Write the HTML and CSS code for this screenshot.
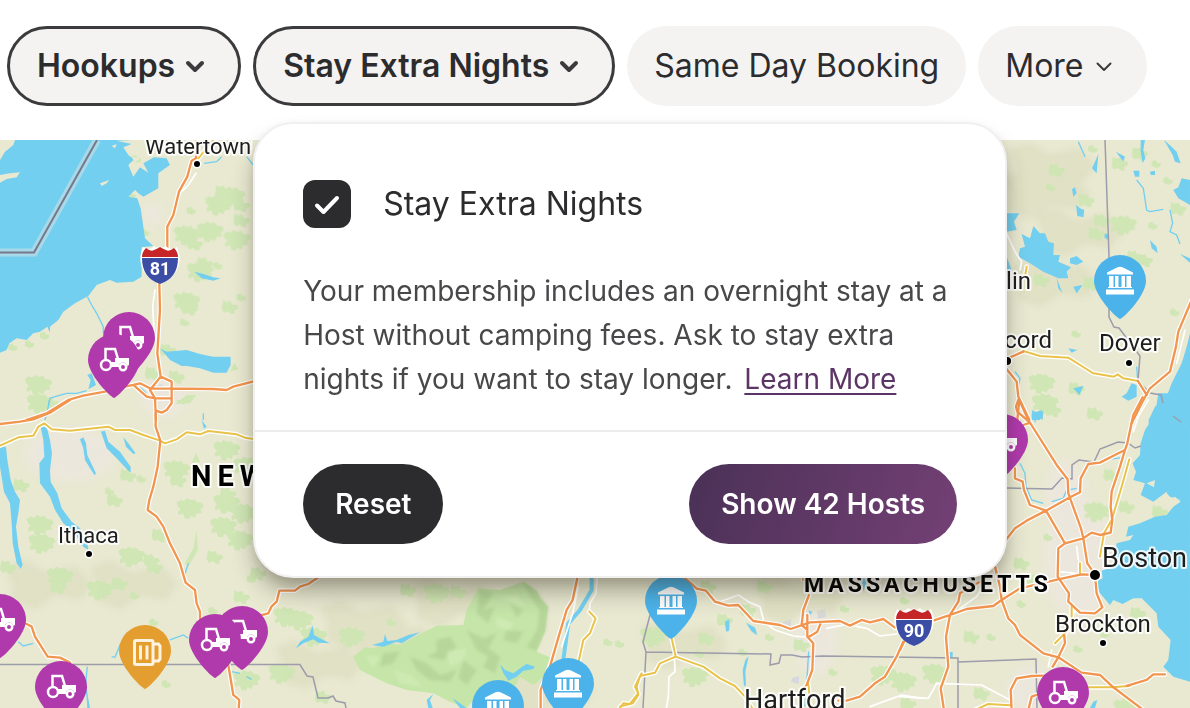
FILE: index.html
```html
<!DOCTYPE html>
<html lang="en">
<head>
<meta charset="utf-8">
<meta name="viewport" content="width=device-width, initial-scale=1">
<title>Host map</title>
<link rel="stylesheet" href="styles.css">
</head>
<body>
<header class="filters">
  <button class="pill pill-active" type="button">Hookups<svg class="chevron" viewBox="0 0 32 32" aria-hidden="true"><path d="M9 14l7 7 7-7"/></svg></button>
  <div class="filter-anchor">
    <button class="pill pill-active" type="button" aria-expanded="true">Stay Extra Nights<svg class="chevron" viewBox="0 0 32 32" aria-hidden="true"><path d="M9 14l7 7 7-7"/></svg></button>
    <section class="popover" aria-label="Stay Extra Nights">
      <div class="popover-body">
        <label class="check" for="extra-nights">
          <span class="check-box">
            <input class="check-input" type="checkbox" id="extra-nights" checked>
            <svg class="check-mark" viewBox="0 0 48 48" aria-hidden="true"><path d="M14 25.500l6.500 6.500L34 18"/></svg>
          </span>
          <span>Stay Extra Nights</span>
        </label>
        <p class="note">Your membership includes an overnight stay at a Host without camping fees. Ask to stay extra nights if you want to stay longer. <a class="learn" href="#">Learn More</a></p>
      </div>
      <footer class="popover-actions">
        <button class="action action-dark" type="button">Reset</button>
        <button class="action action-primary" type="button">Show 42 Hosts</button>
      </footer>
    </section>
  </div>
  <button class="pill" type="button">Same Day Booking</button>
  <button class="pill" type="button">More<svg class="chevron chevron-thin" viewBox="0 0 32 32" aria-hidden="true"><path d="M9.500 14.500l6.500 6.500 6.500-6.500"/></svg></button>
</header>

<main class="map">
<svg class="map-canvas" viewBox="0 140 1190 568" preserveAspectRatio="xMinYMin slice" role="img" aria-label="Map of hosts in New York and New England">
  <defs>
    <path id="wood-a" d="M0 12l12-8 10 4 8-8 14 6 8-4 10 10 14 2 6 12-10 6 4 12-16 2-6 12-12-6-4 10-14-2-4-14-14 4-2-10 8-8-8-6z"/>
    <path id="wood-b" d="M4 0l10 6 12-4 6 12 14 0 4 10-12 8 2 8-12 2-8-8-14 4-6-12z"/>
    <path id="wood-c" d="M0 4l12-4 6 8 10 2-2 10-12 4-14-6z"/>
    <path id="slope" d="M0 8l20-8 22 12 30-6 16 18-12 16-26-4-20 14-24-10 2-14z"/>
    <path id="pin" d="M0 0C-5-2-26-24-26-38A26 26 0 0 1 26-38C26-24 5-2 0 0z"/>
    <g id="tractor-pin">
      <use href="#pin" class="pin-purple"/>
      <g class="glyph-line"><circle cx="-8" cy="-33" r="5"/><path d="M-8.500-39v-10H1l3 10"/><circle cx="9" cy="-31" r="3.200"/></g>
      <path class="glyph-fill" d="M-3-36H1v-4H15v7l-2 1a4 4 0 0 0-8 1H-2z"/>
    </g>
    <g id="museum-pin">
      <use href="#pin" class="pin-blue"/>
      <path class="glyph-fill" d="M-13-44.500v-2L-3-51.500Q0-53 3-51.500L13-46.500v2zM-11-43h4.500v11H-11zM-5-43h3.500v11H-5zM1.500-43H5v11H1.500zM6.500-43H11v11H6.500zM-12-32H12v1H-12zM-14-29.500H14v5H-14z"/>
    </g>
    <g id="beer-pin">
      <use href="#pin" class="pin-orange"/>
      <g class="glyph-line glyph-beer"><rect x="-10.500" y="-48.500" width="18.500" height="24" rx="1.500"/><path d="M8-45h5.500l1.500 2v13l-1.500 2H8M-4.500-43.500v14M2-43.500v14"/></g>
    </g>
    <g id="shield">
      <path class="shield-case" d="M-17-19l4 2q5 0 7-3 3 3 6 0 3 3 6 0 2 3 7 3l4-2q4 8 2 18-4 14-19 19-15-5-19-19-2-10 2-18z"/>
      <path class="shield-red" d="M-18-9Q-18-14-14-18 -9-14-6-16 -3-17 0-19 3-17 6-16 9-14 14-18 18-14 18-9z"/>
      <path class="shield-blue" d="M-18-8h36q0 20-18 26Q-18 12-18-8z"/>
    </g>
    <g id="motorways">
      <g transform="translate(0 130) scale(.3333)">
        <path d="M588 20V85L575 92 562 140 537 185 520 255 502 290V370M478 460L480 540 472 670 482 740 450 780 465 805 468 870M80 870L140 850 205 810 250 797 315 785 375 770 400 765 420 760 450 775 640 777 680 780 700 770 770 752M482 740L515 755V820L500 840 485 848 468 842M400 765L440 800 465 805H512"/>
      </g>
      <g transform="translate(0 400) scale(.3333)">
        <path d="M0 72L60 65 100 58 150 38 210 0M467 40V80L481 122 473 200 460 260 448 300 443 330 470 350 490 380 510 430 540 490 557 548 585 570 590 610 600 635V670M60 668L80 672 95 680 105 710 143 770 180 773 210 788M685 795L700 885 718 900 716 930"/>
      </g>
      <g transform="translate(250 560) scale(.3333)">
        <path d="M35 165L55 160 64 140 80 125 88 92H135L150 80 175 72 215 45M985 40L968 120 950 150 920 250 900 320 872 390V450"/>
      </g>
      <g transform="translate(620 560) scale(.3333)">
        <path d="M190 50L230 86 258 92 285 125 325 137 355 135 400 183 480 195 512 207 570 187 660 183 690 197 725 180 750 187 790 177 825 203M550 40V60M567 105L550 150 545 195 560 208M562 165V230L580 250 577 330 560 375 545 390M603 187L592 215 565 232M850 245L830 290 795 350 765 370 720 410 680 422H655"/>
      </g>
      <g transform="translate(900 400) scale(.3333)">
        <path d="M728-8L700 45 682 130 675 150 655 160 600 188 565 192 542 235 540 277 510 292 438 332 380 362 345 385 310 430M675 150L660 200 635 275 632 320 637 360 632 398 600 405 575 398 550 415 495 430 475 445 473 530 507 580 505 605 540 638 585 640 607 622 590 580 585 525M358 0L385 60 470 195 503 238 505 280 543 385 550 415 562 490 583 520M355 0L348 20 352 35 390 68 370 75M345 205V235L368 245 372 270 390 315 438 332 495 430M585 525L545 523 475 538 360 565 305 600 280 618 200 627 150 645 100 662M285 500L300 560 305 600 325 655 345 675 360 705 430 760 475 772 545 818 600 825 640 862 730 930M240 545L180 580 175 605 150 645 138 710 145 800 122 865 132 930M492 700L495 730 475 772 458 800M430 827L395 828 350 835 332 870 335 930M410 885L395 890 385 930M0 750L12 725M680 858L740 840 760 823H795"/>
      </g>
      <g transform="translate(990 130) scale(.3333)">
        <path d="M605 510L565 605 558 650 540 725 480 775 455 820 425 880M443 752L470 795M50 690L60 682 100 665M40 705L80 755 85 800 118 870M88 810L82 870"/>
      </g>
    </g>
    <g id="highways">
      <g transform="translate(0 130) scale(.3333)"><path d="M595 85L640 30"/></g>
      <g transform="translate(0 400) scale(.3333)"><path d="M0 137L55 112 100 107 115 80 133 70 155 88 210 92 325 80 345 90 390 90 430 105 480 122 495 130 530 118 560 97 600 103 625 93 710 103 735 113 770 118"/></g>
      <g transform="translate(250 560) scale(.3333)"><path d="M1018 155L1037 175 1020 220 1000 240 985 310M1175 340L1155 380 1165 400 1140 432 1120 430 1105 450"/></g>
      <g transform="translate(620 560) scale(.3333)"><path d="M155 235L167 290 120 310 105 338 60 348 50 380 55 405 38 430 0 440M167 290L250 320 300 355 345 378 375 410 400 450M565 372L568 400"/></g>
      <g transform="translate(900 400) scale(.3333)"><path d="M688 178L665 260 635 360 612 400 600 470M515 620V680L465 730M565 862L640 862 690 857M225 930L265 912 330 916M540 490V520"/></g>
      <g transform="translate(990 130) scale(.3333)"><path d="M100 663L150 678 235 683 275 708 310 730 372 740 383 733 400 745 440 752M110 410L105 440"/></g>
    </g>
  </defs>

  <rect class="land" x="0" y="140" width="1190" height="568"/>

  <g class="urban">
    <ellipse cx="163" cy="398" rx="22" ry="20"/><ellipse cx="153" cy="215" rx="9" ry="12"/><ellipse cx="70" cy="455" rx="45" ry="26"/><ellipse cx="815" cy="640" rx="22" ry="34"/><ellipse cx="1078" cy="560" rx="34" ry="58"/><ellipse cx="1066" cy="495" rx="20" ry="34"/><ellipse cx="1030" cy="690" rx="22" ry="24"/>
  </g>
  <g class="town"><path d="M783 622l8-3v10l-6 2zM817 611l8-2 1 8-8 2zM792 678l7-2v8l-8-2zM155 387l7-3 3 5-8 2z"/></g>

  <g class="relief">
    <use href="#slope" x="1008" y="142"/><use href="#slope" x="1002" y="170"/><use href="#slope" x="1035" y="208"/><use href="#slope" x="1010" y="258"/>
    <use href="#slope" x="320" y="600"/><use href="#slope" x="350" y="620"/><use href="#slope" x="410" y="578"/><use href="#slope" x="275" y="640"/><use href="#slope" x="640" y="620"/><use href="#slope" x="90" y="560"/><use href="#slope" x="5" y="560"/><use href="#slope" x="755" y="575"/><use href="#slope" x="505" y="668"/>
  </g>

  <g class="woods">
    <g transform="translate(0 130) scale(.3333)">
      <use href="#wood-a" x="615" y="195"/><use href="#wood-a" x="655" y="170"/><use href="#wood-b" x="700" y="205"/><use href="#wood-b" x="645" y="165"/><use href="#wood-c" x="560" y="230"/><use href="#wood-a" x="520" y="285"/><use href="#wood-a" x="590" y="275"/><use href="#wood-b" x="560" y="320"/><use href="#wood-a" x="670" y="300"/><use href="#wood-b" x="700" y="250"/><use href="#wood-b" x="590" y="380"/><use href="#wood-a" x="560" y="395"/><use href="#wood-c" x="640" y="395"/><use href="#wood-a" x="520" y="485"/><use href="#wood-b" x="545" y="515"/><use href="#wood-b" x="665" y="510"/><use href="#wood-c" x="710" y="490"/><use href="#wood-c" x="540" y="565"/><use href="#wood-b" x="480" y="640"/><use href="#wood-b" x="505" y="720"/><use href="#wood-b" x="435" y="710"/><use href="#wood-a" x="75" y="735"/><use href="#wood-a" x="80" y="790"/><use href="#wood-b" x="130" y="800"/><use href="#wood-c" x="380" y="185"/><use href="#wood-c" x="395" y="75"/><use href="#wood-c" x="420" y="295"/><use href="#wood-c" x="75" y="630"/><use href="#wood-c" x="120" y="605"/><use href="#wood-c" x="25" y="640"/>
      <path d="M525 822L560 795 588 795 570 820zM690 725L703 698 715 718z"/>
    </g>
    <g transform="translate(0 400) scale(.3333)">
      <use href="#wood-a" x="80" y="345"/><use href="#wood-a" x="85" y="400"/><use href="#wood-b" x="40" y="235"/><use href="#wood-b" x="320" y="280"/><use href="#wood-c" x="315" y="262"/><use href="#wood-b" x="360" y="205"/><use href="#wood-c" x="410" y="225"/><use href="#wood-a" x="490" y="180"/><use href="#wood-b" x="510" y="220"/><use href="#wood-b" x="455" y="385"/><use href="#wood-a" x="355" y="440"/><use href="#wood-b" x="440" y="480"/><use href="#wood-b" x="430" y="460"/><use href="#wood-a" x="140" y="500"/><use href="#wood-b" x="150" y="540"/><use href="#wood-a" x="260" y="540"/><use href="#wood-b" x="335" y="530"/><use href="#wood-c" x="390" y="575"/><use href="#wood-a" x="530" y="295"/><use href="#wood-a" x="640" y="120"/><use href="#wood-a" x="640" y="280"/><use href="#wood-a" x="690" y="310"/><use href="#wood-a" x="630" y="350"/><use href="#wood-a" x="680" y="390"/><use href="#wood-b" x="620" y="450"/><use href="#wood-a" x="700" y="170"/><use href="#wood-b" x="660" y="260"/><use href="#wood-b" x="700" y="570"/><use href="#wood-c" x="740" y="525"/><use href="#wood-b" x="0" y="480"/><use href="#wood-c" x="448" y="655"/><use href="#wood-c" x="625" y="620"/><use href="#wood-a" x="700" y="810"/><use href="#wood-c" x="485" y="840"/>
      <path d="M575 188L588 158 600 186zM555 490L580 445 590 390 594 450 565 500zM525 0H570L550 14z"/>
    </g>
    <g transform="translate(250 560) scale(.3333)">
      <use href="#wood-a" x="70" y="140"/><use href="#wood-a" x="110" y="150"/><use href="#wood-a" x="150" y="200"/><use href="#wood-a" x="265" y="200"/><use href="#wood-a" x="520" y="70"/><use href="#wood-b" x="600" y="75"/><use href="#wood-b" x="450" y="70"/><use href="#wood-a" x="55" y="310"/><use href="#wood-c" x="410" y="175"/><use href="#wood-b" x="195" y="390"/><use href="#wood-c" x="1060" y="235"/><use href="#wood-c" x="1095" y="240"/><use href="#wood-b" x="0" y="20"/>
    </g>
    <g transform="translate(620 560) scale(.3333)">
      <use href="#wood-b" x="235" y="215"/><use href="#wood-b" x="290" y="160"/><use href="#wood-a" x="185" y="320"/><use href="#wood-b" x="360" y="130"/><use href="#wood-c" x="355" y="265"/><use href="#wood-a" x="60" y="200"/><use href="#wood-c" x="225" y="270"/><use href="#wood-c" x="435" y="220"/><use href="#wood-b" x="520" y="235"/><use href="#wood-a" x="750" y="315"/><use href="#wood-a" x="810" y="335"/><use href="#wood-c" x="660" y="135"/><use href="#wood-c" x="840" y="110"/><use href="#wood-b" x="410" y="60"/><use href="#wood-b" x="240" y="60"/><use href="#wood-c" x="625" y="325"/>
    </g>
    <g transform="translate(900 400) scale(.3333)">
      <use href="#wood-a" x="550" y="305"/><use href="#wood-b" x="610" y="205"/><use href="#wood-b" x="655" y="300"/><use href="#wood-b" x="435" y="10"/><use href="#wood-c" x="430" y="400"/><use href="#wood-b" x="340" y="470"/><use href="#wood-b" x="690" y="620"/><use href="#wood-c" x="520" y="735"/><use href="#wood-c" x="260" y="700"/><use href="#wood-a" x="65" y="790"/><use href="#wood-b" x="190" y="690"/><use href="#wood-b" x="220" y="860"/><use href="#wood-a" x="640" y="895"/><use href="#wood-b" x="0" y="890"/><use href="#wood-b" x="755" y="315"/><use href="#wood-c" x="350" y="600"/><use href="#wood-b" x="560" y="20"/><use href="#wood-c" x="600" y="690"/><use href="#wood-b" x="380" y="520"/>
    </g>
    <g transform="translate(990 130) scale(.3333)">
      <use href="#wood-b" x="175" y="100"/><use href="#wood-c" x="168" y="160"/><use href="#wood-c" x="295" y="45"/><use href="#wood-b" x="365" y="80"/><use href="#wood-b" x="425" y="50"/><use href="#wood-c" x="485" y="90"/><use href="#wood-b" x="265" y="190"/><use href="#wood-b" x="310" y="250"/><use href="#wood-a" x="360" y="255"/><use href="#wood-b" x="295" y="290"/><use href="#wood-b" x="130" y="430"/><use href="#wood-b" x="410" y="360"/><use href="#wood-b" x="280" y="440"/><use href="#wood-c" x="475" y="275"/><use href="#wood-b" x="540" y="215"/><use href="#wood-a" x="115" y="730"/><use href="#wood-b" x="235" y="755"/><use href="#wood-c" x="540" y="535"/><use href="#wood-c" x="245" y="600"/><use href="#wood-a" x="125" y="790"/><use href="#wood-b" x="440" y="370"/><use href="#wood-c" x="520" y="140"/>
    </g>
  </g>

  <!-- Catskill park -->
  <g transform="translate(250 560) scale(.3333)">
    <path class="park" d="M310 290L345 262 370 265 410 250 450 255 510 222 560 197 640 195 650 150 685 85 750 90 820 65 860 92 870 115 895 140 885 215 860 275 900 292 880 350 850 375 810 350 790 390 740 370 700 385 650 444 600 425 550 400 470 390 410 370 370 350 330 330z"/>
    <path class="park-shade" d="M820 65L860 92 895 140 888 210 858 272 830 262 862 210 868 150 840 110zM690 90L730 100 700 150 735 140 715 190 680 160zM650 210L700 235 740 220 715 265 750 290 735 340 700 320 715 290 680 270zM560 240L600 230 620 260 580 300 530 290 560 275zM480 290L530 310 570 345 620 330 600 365 540 360 500 330zM640 300L680 330 650 375 625 355zM780 130L820 150 800 175zM400 280L450 275 430 310 390 320zM770 210L820 215 800 250 760 240z"/>
    <path class="park-light" d="M750 110L800 105 830 140 780 125zM590 275L650 265 640 300 600 320zM430 330L480 345 520 380 450 370zM740 170L790 190 780 210 740 200zM345 285L390 290 370 325z"/>
  </g>

  <g class="water">
    <g transform="translate(0 130) scale(.3333)">
      <path d="M45 30H395L350 32 395 42 370 52 385 75 402 88 385 105 400 140 420 112 445 128 430 100 462 82 500 85 510 105 475 130V175L430 200 415 190 405 180 385 200 412 205 422 235 430 290 435 325 460 348 425 352V440L400 455 350 458 330 450 290 465 265 498 225 520 190 545 175 570 150 590V608L142 590 120 605 100 610 80 630 50 625 28 640 20 660 0 668V90L15 65 40 45zM480 655L500 665 560 660 600 672 640 680H692V705L680 728 640 728 600 715 560 708 545 708 510 690 495 672zM583 425L610 432 640 442 662 445 640 452 605 445zM262 735L275 730 288 765 265 778 272 750zM420 768L440 788 435 792z"/>
      <path class="stream" d="M262 500L275 525 290 550 310 590V610M145 830L150 805 165 800 200 790 230 790 260 782M740 80L760 105M612 100L650 95 665 80M610 850V870"/>
      <path class="isle" d="M0 135L30 130 60 127 50 142 20 147 0 158zM300 160L328 150 320 160 305 168zM395 80L420 85 405 98zM335 48L350 42 345 55z"/>
    </g>
    <g transform="translate(0 400) scale(.3333)">
      <path d="M0 140H18L22 180 32 240 45 275 60 300 55 340 48 380 55 440 68 495 62 506 50 490 38 430 35 370 30 310 12 275 0 200zM122 80H140L150 120 156 160 150 210 152 245 172 280 185 325 215 365 240 385 262 430 265 450 250 440 220 395 190 370 165 330 150 290 120 250 118 190 133 170 130 120zM240 118L250 112 258 130 262 165 288 220 284 226 270 205 255 180 250 145zM303 95L315 92 325 125 360 155 392 200V217L385 212 350 175 320 145zM370 112L385 130 407 160 400 162 378 140zM605 60L620 80 612 86zM262 880L270 924H262z"/>
      <path class="stream" d="M148 0L145 20 135 60M565 490L555 522M55 725L70 738 100 730M335 770L345 772 362 730M510 720L550 705 565 715M262 800L257 850 265 924M695 815L720 820M740 830L755 838"/>
    </g>
    <g transform="translate(250 560) scale(.3333)">
      <path d="M138 265L150 245 175 230 188 196 192 225 215 238 240 250 205 248 190 238 160 250zM367 255L400 245 405 222 412 243 440 240 475 225 510 217 475 238 455 250 440 245 400 260zM750 313L765 330 790 340 820 318 830 312 855 320 848 328 820 332 800 350 775 362 760 340zM530 420L550 402 540 420 548 444H535zM608 415L650 444H630z"/>
      <path class="river" d="M1025 50V90L990 150 955 190 940 300"/>
    </g>
    <g transform="translate(620 560) scale(.3333)">
      <path d="M386 288L376 335 378 375 372 380 368 330 376 300zM315 185L328 178V212L318 215zM378 188L405 203 412 225 395 215zM565 152L578 155 570 165zM725 55L742 60 730 95z"/>
      <path class="stream" d="M566 275L560 370M558 385L555 440"/>
    </g>
    <g transform="translate(900 400) scale(.3333)">
      <path d="M775-20L765 45 735 90 722 130 720 165 698 190 708 215 700 240 735 250 722 285 760 305 780 290 800 275 805 300 825 290 842 305 820 320 800 345 765 350 720 370 685 380 678 410 700 405 690 420 650 430 640 500 605 512 608 535 585 545 600 580 630 615 640 600 668 612 700 595 725 595 770 640 775 680 812 720 805 780 790 800 820 830 870 845V-20zM395 30L415 40 430 35 428 60 412 50 405 70zM148 757L158 755V772H150zM580 905L592 900 585 924H570z"/>
      <path class="stream" d="M360 190L375 220 378 260 395 300 430 310M455 305L490 295 500 270 530 265M620 178L675 172M680 560L690 585 700 595"/>
      <path class="isle" d="M740 250L765 240 762 262zM770 300L800 280 810 290 840 300 820 318 780 318z"/>
    </g>
    <g transform="translate(990 130) scale(.3333)">
      <path d="M130 288L150 310 165 310 175 335 192 340 190 375 210 375 205 395 243 412 230 425 235 445 205 445 160 425 120 400 85 380 90 355 105 350 95 312 120 325zM240 385L260 378 280 395 260 405 240 400zM50 250L88 250 72 275 80 300 50 305zM258 225L270 235 283 240 280 262 262 258zM246 178L255 172 260 190 250 200zM550 180L565 172 575 145 600 150V225L565 205zM378 65L405 80 400 95zM452 30H465L460 60 466 85 458 100 452 65zM522 30L545 50 560 65 572 100 555 95 548 75zM315 95L325 72 320 130 306 115zM480 330L500 350 503 370 485 355zM430 122H448V140H435zM480 125L495 122V135H482zM250 470L278 465 260 490zM395 800L410 790 425 760 440 765V800L415 812zM345 310L357 315V332L343 322zM250 775L280 768 268 795zM235 655L262 660 245 668zM570 372L600 385V398zM605 590L590 650 575 700 545 760 530 800 495 830 476 870V900H620V590zM200 445L218 490 205 475zM50 380L65 420 50 440zM125 850L158 840 150 870H125z"/>
      <path class="stream" d="M440 150L460 175 470 240 480 245 520 238M540 240L548 280 540 305 560 315 570 342M265 35L285 80M75 725L90 745 85 770M440 710L443 750"/>
    </g>
  </g>

  <g class="borders">
    <path class="border-halo" d="M0 252.500H34L97 140"/>
    <path class="border-lake" d="M0 252.500H34L97 140"/>
    <path d="M0 664.500H300L307 676 313 677 318 698 328 698 333 696 336 701 345 703 346 708"/>
    <path d="M650 615L643 642 646 652 771 654 770 665 779 663 781 655 792 655 802 657 823 656 958 658V708M646 652L643 708M958 662L1036 659 1037 708"/>
    <path d="M1007 488L1052 489 1062 478 1072 479V465L1079 460 1094 462 1100 449 1118 442 1128 443 1135 448 1141 446M1173 416L1181 422"/>
    <path d="M1105 140L1109 256V317L1114 327 1119 328 1125 336 1140 356 1138 381 1150 393 1161 395 1163 403"/>
  </g>

  <g class="local-roads">
    <g transform="translate(0 130) scale(.3333)"><path d="M588 130L565 165 545 185M465 480L458 530 462 600 475 660M755 30V60"/></g>
    <g transform="translate(250 560) scale(.3333)"><path d="M1042 50L1038 100 1020 130 1018 155M985 80L968 160 935 260"/></g>
    <g transform="translate(620 560) scale(.3333)"><path d="M163 290L165 335 147 350 145 410 138 450M300 125L355 105 385 125 420 140 430 178M430 185L465 210 520 228 570 232M620 205L680 193 740 205 780 228 830 222M750 440L845 405 905 415"/></g>
    <g transform="translate(900 400) scale(.3333)"><path d="M0 890L85 895 110 850 245 855 330 900M745 0L715 50 700 95M180 625L230 590 250 560M475 515L530 520M530 440L535 480M520 610L525 640M445 800L455 750"/></g>
    <g transform="translate(990 130) scale(.3333)"><path d="M40 290L75 365 95 395 90 420M585 600L560 700"/></g>
  </g>
  <use href="#highways" class="road-case"/>
  <use href="#motorways" class="road-case"/>
  <use href="#highways" class="road-yellow"/>
  <use href="#motorways" class="road-orange"/>

  <g class="dots">
    <circle cx="197" cy="164" r="3"/><circle cx="89" cy="554" r="3"/><circle cx="1129" cy="363" r="3"/><circle cx="1103" cy="643" r="3"/><circle cx="1095" cy="575" r="5"/><circle cx="1007" cy="361" r="4"/>
  </g>
  <g class="places">
    <text x="145" y="154">Watertown</text>
    <text x="58" y="543">Ithaca</text>
    <text class="place-town" x="1099" y="351">Dover</text>
    <text class="place-town" x="1052" y="348" text-anchor="end">Concord</text>
    <text class="place-town" x="1031" y="289" text-anchor="end">Franklin</text>
    <text class="place-town" x="1055" y="632">Brockton</text>
    <text class="place-city" x="744" y="709">Hartford</text>
    <text class="place-city" x="1102" y="567">Boston</text>
    <text class="place-state-lg" x="191" y="486">NEW YORK</text>
    <text class="place-state" x="804" y="592">MASSACHUSETTS</text>
  </g>

  <use href="#shield" x="160" y="266"/><text class="shield-text" x="160" y="275">81</text>
  <use href="#shield" x="914" y="628"/><text class="shield-text" x="914" y="637">90</text>

  <use href="#tractor-pin" x="129" y="376"/><use href="#tractor-pin" x="114" y="398"/>
  <use href="#tractor-pin" x="0" y="658"/><use href="#tractor-pin" x="61" y="725"/>
  <use href="#tractor-pin" x="242" y="670"/><use href="#tractor-pin" x="215" y="678"/>
  <use href="#tractor-pin" x="1002" y="478"/><use href="#tractor-pin" x="1063" y="731"/>
  <use href="#beer-pin" x="145" y="689"/>
  <use href="#museum-pin" x="1120" y="319"/><use href="#museum-pin" x="671" y="639"/><use href="#museum-pin" x="498" y="744"/><use href="#museum-pin" x="568" y="722"/>
</svg>
</main>
</body>
</html>
```
FILE: styles.css
```css
* { box-sizing: border-box; }

body {
  margin: 0;
  height: 100vh;
  display: flex;
  flex-direction: column;
  overflow: hidden;
  background: #fff;
  color: #2c2c2e;
  font-family: Inter, "Liberation Sans", sans-serif;
}

button { font-family: inherit; cursor: pointer; }

.filters {
  display: flex;
  gap: 12px;
  padding: 26px 7px 34px;
}

.pill {
  display: flex;
  align-items: center;
  height: 80px;
  padding: 0 27px 2px;
  border: 0;
  border-radius: 40px;
  background: #f4f3f2;
  color: #2c2c2e;
  font-size: 32px;
  font-weight: 400;
  white-space: nowrap;
}

.pill-active {
  border: 3px solid #3b3b3d;
  font-weight: 600;
}

.chevron {
  width: 32px;
  height: 32px;
  margin-left: 4px;
  fill: none;
  stroke: #3b3b3d;
  stroke-width: 4;
  stroke-linecap: round;
  stroke-linejoin: round;
}

.chevron-thin { stroke-width: 2; }

.filter-anchor { position: relative; }

.popover {
  position: absolute;
  z-index: 2;
  top: 96px;
  left: 0;
  width: 754px;
  border: 2px solid #f1f0f0;
  border-radius: 40px;
  background: #fff;
  box-shadow: 0 16px 24px -4px rgba(40, 36, 20, 0.4), 0 4px 12px rgba(40, 36, 20, 0.08);
}

.popover-body { padding: 56px 48px 29px; }

.check {
  display: flex;
  align-items: center;
  gap: 32px;
  font-size: 32px;
  line-height: 46px;
}

.check-box { display: grid; }

.check-input,
.check-mark {
  grid-area: 1 / 1;
  width: 48px;
  height: 48px;
  margin: 0;
}

.check-input {
  appearance: none;
  border-radius: 12px;
  background: #2c2c2e;
}

.check-mark {
  fill: none;
  stroke: #fff;
  stroke-width: 4;
  stroke-linecap: round;
  stroke-linejoin: round;
  pointer-events: none;
}

.note {
  margin: 41px 0 0;
  color: #48484a;
  font-size: 28px;
  line-height: 44px;
}

.learn {
  margin-left: 4px;
  color: #5c3566;
  text-decoration-thickness: 2px;
  text-underline-offset: 4px;
}

.popover-actions {
  display: flex;
  justify-content: space-between;
  padding: 32px 48px;
  border-top: 2px solid #ececec;
}

.action {
  height: 80px;
  padding: 0 32px;
  border: 0;
  border-radius: 40px;
  color: #fff;
  font-size: 28px;
  font-weight: 600;
}

.action-dark { background: #2c2c2e; }
.action-primary { background: linear-gradient(108deg, #4a3156, #744075); }

.map {
  flex: 1;
  min-height: 0;
}

.map-canvas {
  display: block;
  width: 100%;
  height: 100%;
}

.land { fill: #e9e9d2; }
.urban { fill: #ece7dc; filter: blur(4px); }
.town { fill: #d8d8dc; }
.relief { fill: #d6d6b6; opacity: 0.45; filter: blur(3px); }
.woods { fill: #cde6b2; opacity: 0.9; }
.park { fill: #c5e5a9; }
.park-shade { fill: #a9c98c; opacity: 0.5; filter: blur(5px); }
.park-light { fill: #d3edb8; opacity: 0.7; filter: blur(5px); }
.water { fill: #73cff0; }
.isle { fill: #e9e9d2; }

.stream,
.river {
  fill: none;
  stroke: #73cff0;
  stroke-width: 4;
}

.river { stroke-width: 12; }

.borders {
  fill: none;
  stroke: #9c9cab;
  stroke-width: 1.5;
}

.borders .border-halo { stroke: #a7d9e8; stroke-width: 8; }
.borders .border-lake { stroke: #78788c; stroke-width: 2; }

.local-roads,
.road-case,
.road-yellow,
.road-orange {
  fill: none;
  stroke: #fff;
  stroke-linejoin: round;
  stroke-linecap: round;
}

.local-roads { stroke-width: 5; }
.road-case { stroke-width: 14; }
.road-yellow { stroke: #e9c349; stroke-width: 6; }
.road-orange { stroke: #f2954f; stroke-width: 7; }

.dots {
  stroke: #fff;
  stroke-width: 3;
  paint-order: stroke;
}

.places {
  fill: #1d1d1d;
  stroke: rgba(255, 255, 255, 0.85);
  stroke-width: 4;
  stroke-linejoin: round;
  paint-order: stroke;
  font-family: Roboto, "Liberation Sans", sans-serif;
  font-size: 22px;
}

.place-town { font-size: 24px; }
.place-city { font-size: 27px; }

.place-state,
.place-state-lg {
  fill: #000;
  font-size: 23px;
  font-weight: 700;
  letter-spacing: 4px;
}

.place-state-lg { font-size: 29px; letter-spacing: 6px; }

.shield-case { fill: #fff; }
.shield-red { fill: #c62627; }
.shield-blue { fill: #3c4da6; }

.shield-text {
  fill: #fff;
  font: 700 18px Roboto, "Liberation Sans", sans-serif;
  text-anchor: middle;
}

.pin-purple { fill: #b03aac; }
.pin-blue { fill: #4cb3ea; }
.pin-orange { fill: #e49d2f; }
.glyph-fill { fill: #fff; }

.glyph-line {
  fill: none;
  stroke: #fff;
  stroke-width: 2.5;
}

.glyph-beer { stroke-width: 3; stroke: #fff3df; }
```
